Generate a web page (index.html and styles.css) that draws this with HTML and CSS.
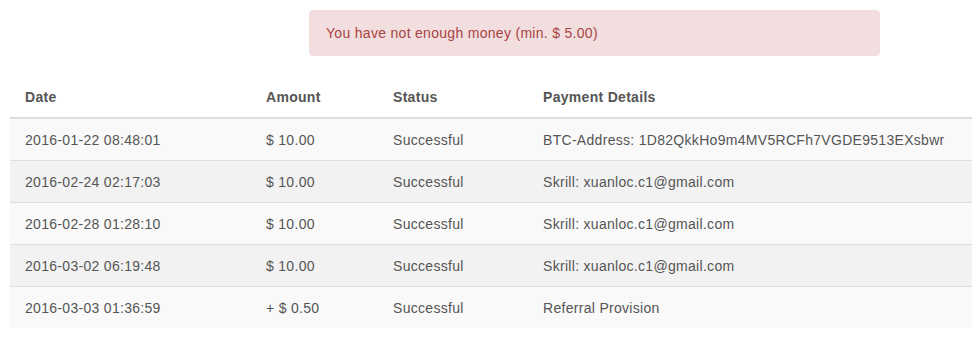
FILE: index.html
```html
<!DOCTYPE html>
<html lang="en">
<head>
  <meta charset="UTF-8" />
  <title>Payouts</title>
  <link rel="stylesheet" href="styles.css">
</head>
<body>

  <div class="page">
    <div class="alert-row">
      <div class="alert">You have not enough money (min. $ 5.00)</div>
    </div>

    <table class="payouts">
      <thead>
        <tr>
          <th class="col-date">Date</th>
          <th class="col-amount">Amount</th>
          <th class="col-status">Status</th>
          <th>Payment Details</th>
        </tr>
      </thead>
      <tbody>
        <tr>
          <td>2016-01-22 08:48:01</td>
          <td>$ 10.00</td>
          <td>Successful</td>
          <td>BTC-Address: 1D82QkkHo9m4MV5RCFh7VGDE9513EXsbwr</td>
        </tr>
        <tr>
          <td>2016-02-24 02:17:03</td>
          <td>$ 10.00</td>
          <td>Successful</td>
          <td>Skrill: xuanloc.c1@gmail.com</td>
        </tr>
        <tr>
          <td>2016-02-28 01:28:10</td>
          <td>$ 10.00</td>
          <td>Successful</td>
          <td>Skrill: xuanloc.c1@gmail.com</td>
        </tr>
        <tr>
          <td>2016-03-02 06:19:48</td>
          <td>$ 10.00</td>
          <td>Successful</td>
          <td>Skrill: xuanloc.c1@gmail.com</td>
        </tr>
        <tr>
          <td>2016-03-03 01:36:59</td>
          <td>+ $ 0.50</td>
          <td>Successful</td>
          <td>Referral Provision</td>
        </tr>
      </tbody>
    </table>
  </div>

</body>
</html>
```

FILE: styles.css
```css
* {
  box-sizing: border-box;
  margin: 0;
  padding: 0;
}

body {
  font-family: 'Liberation Sans', Arial, sans-serif;
  font-size: 14px;
  line-height: 20px;
  letter-spacing: 0.3px;
  color: #555;
  background: #fff;
}

.page {
  padding: 10px 0 0 10px;
}

.alert-row {
  padding-left: 299px;
}

.alert {
  width: 571px;
  padding: 12px 16px;
  background-color: #f2dede;
  border: 1px solid #f2dede;
  border-radius: 4px;
  color: #a94442;
}

.payouts {
  width: 962px;
  margin-top: 21px;
  border-collapse: collapse;
}

.payouts th,
.payouts td {
  text-align: left;
  padding: 11px 15px 10px;
  vertical-align: top;
  white-space: nowrap;
}

.payouts th {
  padding: 10px 15px;
  font-weight: bold;
  border-bottom: 2px solid #ddd;
}

.payouts td {
  border-top: 1px solid #ddd;
}

.payouts thead + tbody tr:first-child td {
  border-top: none;
}

.col-date { width: 241px; }
.col-amount { width: 127px; }
.col-status { width: 150px; }

.payouts tbody tr:nth-child(odd) {
  background-color: #f9f9f9;
}

.payouts tbody tr:nth-child(even) {
  background-color: #f2f2f2;
}
```
